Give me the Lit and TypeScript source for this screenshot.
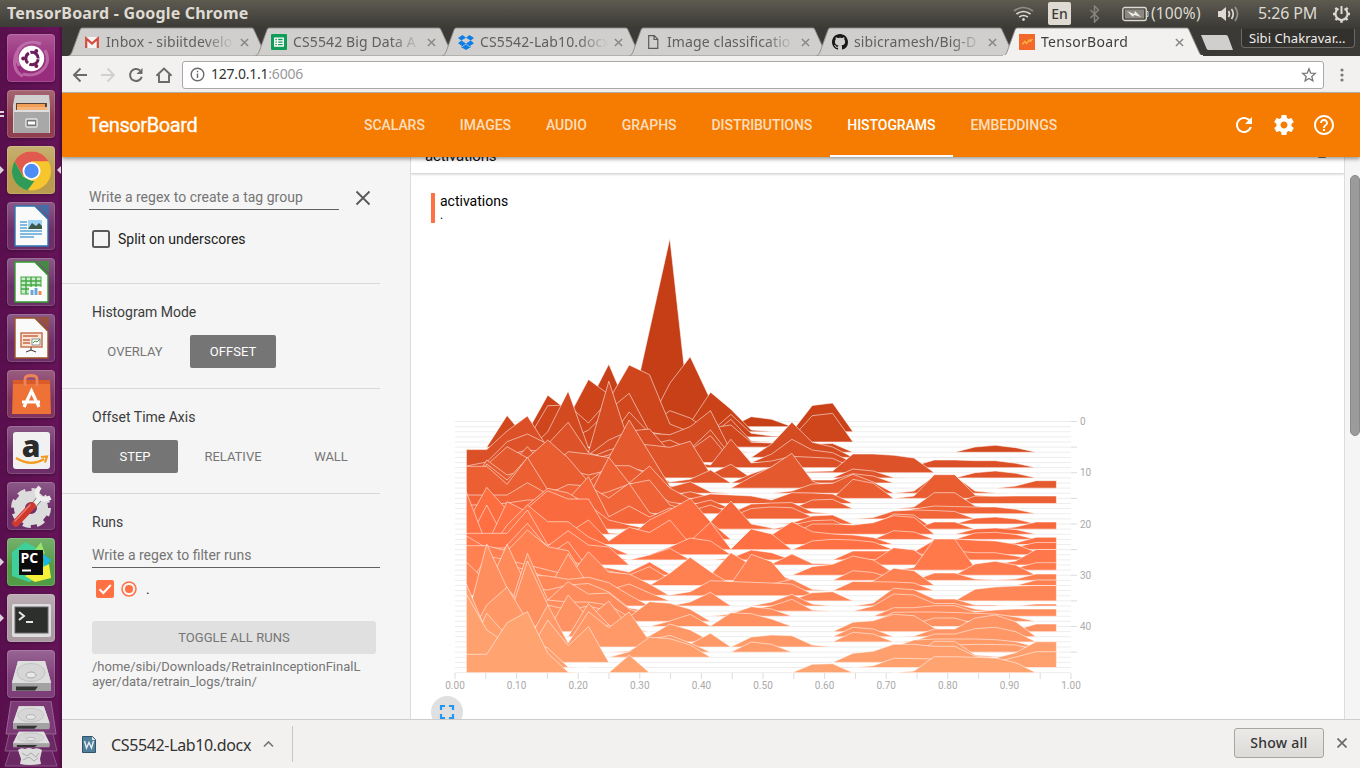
import { LitElement, html, css, svg } from "lit";
import { customElement, property } from "lit/decorators.js";
import { classMap } from "lit/directives/class-map.js";

/* ---------- histogram data: step -> runs of [first bin, y, y, ...] ---------- */
type Run = number[];
const RIDGES: Record<number, Run[]> = {
  0: [[9, 330, 238.5]],
  1: [[6, 404, 364.2, 412, 423, 383.3, 356.8, 400, 418], [14, 416.7, 419.3]],
  2: [[4, 395.2, 411, 418], [11, 423, 392.2, 409.3, 430, 431.5], [17, 405.5, 403]],
  3: [[4, 420, 418, 379.5, 394.5, 400, 425, 410.7, 418, 432, 414.3, 433.3, 436]],
  4: [[3, 440, 405.7, 405, 423, 400, 365, 374.7, 424, 432, 436, 419.3, 441], [16, 438, 415.7, 413.3]],
  5: [[2, 415.5, 440, 442, 440, 430, 410, 393.3, 432, 436, 430, 428, 425, 442.3, 443]],
  6: [[3, 451, 431.7, 391.2, 448, 440, 412, 433.3, 434.7, 426.7, 410.7, 451], [17, 444, 443.5], [25, 447, 445.3, 447.7]],
  7: [[4, 450, 445, 452, 381.2, 443, 445, 440, 449, 430, 456], [15, 444, 422.2, 442.3, 447]],
  8: [[5, 450, 455, 440, 431, 429, 452, 450, 435.7, 460], [15, 454, 439.3, 450, 452.7]],
  9: [[0, 449.6, 449.6, 431, 416, 448, 450, 458, 450, 445, 452, 460, 462, 465, 439.3, 463, 461, 456.3, 457.3, 458.3], [22, 466, 460, 460, 460.7, 460.7, 463.3]],
  10: [[0, 466, 462, 441.7, 434, 444, 422.3, 452.5, 460, 450, 455, 455], [17, 471.5, 471, 454, 454, 455.3, 458]],
  11: [[1, 468, 455, 450, 452, 455, 460, 455, 443, 445, 447.3, 441.3, 474, 464.3], [19, 469, 471, 477.5], [25, 472.7, 471, 473.3]],
  12: [[0, 474, 470, 468, 446.7, 470, 470, 465, 460, 452, 470, 482, 479.3, 470], [14, 474, 467, 457, 480, 480, 473.7, 476]],
  13: [[1, 465, 446.7, 458, 470, 451.7, 454, 457.7, 420, 453, 486], [14, 477, 466.7, 453.3, 481], [27, 486, 480.7, 480.7]],
  14: [[1, 460, 475, 470, 465, 470, 475, 470, 468, 472, 487.3, 481.7, 492], [16, 491, 484, 483.3, 474.3, 482], [22, 491, 476, 476, 491, 493]],
  15: [[1, 464, 480, 458, 440, 458, 482, 465.7, 465.7, 475, 496, 491.7, 497], [19, 479.3, 483.3], [22, 496, 474.7, 474.7, 495, 497]],
  16: [[0, 466.3, 466.3, 484.3, 457.3, 490, 490, 487, 485, 483, 466, 488, 499, 494, 495, 496, 500, 492.7, 493, 494], [25, 496, 496.3, 496, 496, 496]],
  17: [[3, 495, 492, 490, 497, 457.3, 483, 490, 502, 505, 500], [17, 500, 499.3], [22, 507, 492.7, 492.7, 506]],
  18: [[3, 500, 500, 496, 497, 491.7, 484, 480, 505, 511, 505, 513, 504, 503, 502.5, 512], [22, 509, 506, 506.5, 507, 507, 509.3]],
  19: [[0, 495, 495, 495, 482.7, 494, 484.5, 486, 498, 483.3, 512.7, 517], [13, 517, 508.5, 507, 507.7, 517], [20, 517.5, 511, 510, 510.5, 511.5]],
  20: [[0, 505, 505, 503, 500, 500, 499, 476.7, 516.7, 506, 517, 508, 515], [16, 523, 516, 515], [25, 518.3, 517, 519]],
  21: [[3, 505, 488.3, 493, 505, 520, 525], [12, 522, 501, 524, 528], [16, 525, 520.7, 520], [20, 526, 514, 515], [23, 522, 522], [27, 527, 522, 522]],
  22: [[2, 530, 508, 490.7, 499, 499, 533], [17, 524, 524, 525, 522.7, 515.7, 517.3], [25, 529, 528, 529.5]],
  23: [[0, 524, 487.3, 510, 520, 530, 530], [8, 537, 520, 510, 498.3, 522], [21, 530.7, 532], [25, 533, 532.3, 534.5]],
  24: [[0, 560, 505, 544, 532, 535, 533, 520, 541, 527.3, 532.5, 520, 544], [15, 535, 521.7, 531.7, 534, 535, 537.5], [27, 543, 537.3, 537.3]],
  25: [[0, 492, 545, 501.7, 512, 535, 544], [11, 541, 522.3, 549, 529, 534], [17, 541, 539.3, 540, 542], [27, 547, 542.5, 542.5]],
  26: [[2, 525, 505, 521.7, 521.7, 537, 546], [10, 547, 538, 541], [22, 552, 540, 539, 540.3, 541, 544.3, 552]],
  27: [[0, 533.3, 533.3, 533.3, 510, 545, 540, 550, 556], [9, 555, 548.3], [13, 558, 550, 552.7], [19, 551, 551, 551, 551], [24, 551, 552.7, 552.7, 556]],
  28: [[2, 550, 530, 546, 530.7, 545, 547], [15, 564, 554, 563.5, 564], [20, 561, 547.7, 550], [26, 564, 561, 549.5, 549.5]],
  29: [[0, 536, 548, 548, 545, 555, 541.7, 569], [22, 567.5, 539, 539, 568], [27, 568, 562.7, 562.7]],
  30: [[2, 545, 523.3, 548, 560, 567, 568, 572, 562, 574], [17, 566.7, 564.3, 556, 560, 573], [25, 564, 561.3, 565]],
  31: [[2, 555, 550, 560, 565, 570, 571, 575, 566.7, 579], [12, 575, 552.7, 565, 570], [19, 570.7, 572.5, 579], [23, 573, 573, 579, 580, 579, 574, 574]],
  32: [[0, 545.7, 545.7, 551, 530, 546.7, 550.7, 583], [10, 573.3, 557.3, 571.7, 584, 554.3, 561.7], [20, 581, 568.3, 570.7], [28, 580, 580]],
  33: [[1, 556, 560, 565, 570, 575, 580], [15, 584, 579.3, 589.3], [19, 581.5, 581.7, 582, 583]],
  34: [[0, 562, 582, 565, 570, 578, 578, 551.7, 572.3, 574, 584], [10, 595, 591.7, 580.7, 581.5, 582.3, 583, 584, 594]],
  35: [[3, 570, 590, 554, 585, 590, 584, 593], [16, 600, 592.7, 591.7], [25, 589.3, 587, 586, 585.5, 585.5]],
  36: [[2, 580, 575, 576, 579.3, 577.3, 582.7, 595], [11, 602, 592.3], [15, 602, 594.3, 604], [20, 603, 588.3, 589.7, 599, 599, 605, 605], [27, 609, 604, 604]],
  37: [[1, 590, 544.3, 588, 590, 585, 583.5, 592, 608], [14, 609, 606, 599.3, 610], [20, 606, 594, 595, 603.5, 603.5, 609]],
  38: [[2, 618, 553.3, 600, 581.7, 594, 593, 609], [13, 614, 606.7, 609], [21, 607.7, 607.7, 605.7, 605.7, 612, 610, 609, 609, 609]],
  39: [[0, 625, 544, 588, 612, 600, 602, 602, 605, 617, 601.7, 603.3, 609.3], [21, 612.3, 612, 612, 612.5, 613.3, 614, 617]],
  40: [[2, 623, 561, 605, 610, 606, 611], [10, 621, 614.3, 626, 612.7, 613.7, 619], [22, 624, 618, 618, 624]],
  41: [[3, 628, 631, 595, 618, 601, 628], [19, 622.3, 620.7, 614.3, 615.7, 628], [27, 630, 624, 624]],
  42: [[6, 603.3, 625], [19, 627.3, 629], [22, 636, 629, 629, 618, 615, 621.7]],
  43: [[1, 605, 587, 621, 636], [6, 630, 625], [9, 636, 624, 630, 641], [19, 632.3, 634], [22, 641, 634, 634, 628.7, 627.3, 631.7]],
  44: [[3, 642, 605, 643, 611.7, 627.7, 612, 641], [11, 644, 633.3], [14, 637, 635, 635.7, 645], [22, 640, 639, 639, 639, 639.7, 641.7]],
  45: [[0, 584, 632, 645, 645], [8, 651, 640, 635.3, 643], [14, 642, 644.3], [23, 646, 645, 644.3, 644.5, 645, 650]],
  46: [[1, 613.3, 636, 645, 652], [8, 651.7, 637.3, 638.7, 645], [22, 656, 641.3, 641.3, 655, 656.5]],
  47: [[2, 650, 655, 620, 645.7, 626.7], [19, 653.3, 651.3, 644.3, 644.3, 646.3, 646.3, 656, 658, 652.7, 641.7, 641.7]],
  48: [[0, 594, 630, 644, 640, 648, 667], [20, 665.7, 658.3, 658.5, 659, 659, 663, 662, 657, 651.7, 651.7]],
  49: [[0, 654.3, 654.3, 622.7, 611.7, 653.3, 672], [8, 655], [17, 664.3, 663.7], [22, 671, 656.7, 656.7, 657.3, 658, 662.7]],
};

const LAST = 49;
const binX = (k: number) => 466.4 + 20.345 * k;
const baseY = (s: number) => 421.5 + 5.125 * s;

function ridgePath(step: number, run: Run): string {
  const [start, ...ys] = run;
  const b = baseY(step);
  const end = start + ys.length - 1;
  const pts: string[] = [];
  pts.push(start > 0 ? `${binX(start - 1)},${b}` : `${binX(0)},${b}`);
  ys.forEach((y, i) => pts.push(`${binX(start + i)},${Math.min(y, b)}`));
  pts.push(end < 29 ? `${binX(end + 1)},${b}` : `${binX(29)},${b}`);
  return "M" + pts.join("L") + "Z";
}

function ridgeColor(step: number): string {
  const lo = [198, 62, 21], mid = [255, 112, 67], hi = [255, 163, 113];
  const t = step / (LAST / 2);
  const [a, b, f] = t < 1 ? [lo, mid, t] : [mid, hi, t - 1];
  return `rgb(${a.map((v, i) => Math.round(v + (b[i] - v) * f)).join(",")})`;
}

@customElement("ridge-chart")
class RidgeChart extends LitElement {
  static styles = css`
    :host { display: block; }
    svg { display: block; }
    .grid { stroke: #ededed; stroke-width: 1; }
    .tick { stroke: #dcdcdc; stroke-width: 1; }
    .ridge { stroke: rgba(255, 255, 255, 0.6); stroke-width: 0.9; }
    .lbl { font: 10px Roboto, sans-serif; fill: #aaa; }
    .mid { text-anchor: middle; }
  `;
  render() {
    const steps = Array.from({ length: LAST + 1 }, (_, i) => i);
    const xs = Array.from({ length: 21 }, (_, i) => i);
    return html`<svg width="680" height="473" viewBox="431 223 680 473">
      ${steps.map((s) => svg`<line class="grid" x1="455" x2="1071" y1=${baseY(s)} y2=${baseY(s)} />`)}
      ${steps.filter((s) => s % 5 === 0).map((s) => svg`<line class="tick" x1="1071" x2="1077" y1=${baseY(s)} y2=${baseY(s)} />`)}
      ${xs.map((i) => svg`<line class="tick" x1=${455 + 30.8 * i} x2=${455 + 30.8 * i} y1="673" y2="679" />`)}
      ${steps.map((s) => (RIDGES[s] ?? []).map((r) => svg`<path class="ridge" d=${ridgePath(s, r)} fill=${ridgeColor(s)} />`))}
      ${[0, 10, 20, 30, 40].map((s) => svg`<text class="lbl" x="1080" y=${baseY(s) + 3.5}>${s}</text>`)}
      ${xs.filter((i) => i % 2 === 0).map((i) => svg`<text class="lbl mid" x=${455 + 30.8 * i} y="689">${(i / 20).toFixed(2)}</text>`)}
    </svg>`;
  }
}

/* ---------- launcher ---------- */
const docPage = (c: string, inner: unknown) => svg`
  <path d="M8 4h20l13 13v27H8z" fill="#fafafa" stroke=${c} stroke-width="1.4"/>
  <path d="M30 3h12v12z" fill=${c} opacity=".75"/><path d="M28 4v0l13 13" stroke=${c} stroke-width="1.4"/>${inner}`;
const drive = svg`
  <path d="M11 11h27l6 21v7H5v-7z" fill="#cfcfcf"/><path d="M11 11h27l6 22H5z" fill="#dedede"/>
  <ellipse cx="24" cy="22.500" rx="14" ry="9" fill="#d6d6d6" stroke="#c2c2c2"/><ellipse cx="24" cy="25" rx="5" ry="3" fill="#e8e8e8" stroke="#aaa"/>
  <path d="M5 33h39v8H5z" fill="#a2a2a2"/><path d="M9 36.500h22l-3 4H9z" fill="#333"/>`;

const APPS: { bg: string; art: unknown; left?: string; right?: boolean }[] = [
  { bg: "#96287a", art: svg`<path d="M12 32C4 14 20 4 34 10M38 16c8 16-6 28-22 24M16 42C6 38 6 26 10 18" fill="none" stroke="#c77db5" stroke-width="3" opacity=".7"/>
      <circle cx="24.500" cy="24.500" r="12.700" fill="#fff"/><circle cx="25" cy="24.500" r="6.200" fill="none" stroke="#6d1d58" stroke-width="3" stroke-dasharray="11.400 1.600" stroke-dashoffset="-0.800"/>
      <circle cx="16.200" cy="24.500" r="2" fill="#6d1d58"/><circle cx="29.300" cy="16.900" r="2" fill="#6d1d58"/><circle cx="29.300" cy="32.100" r="2" fill="#6d1d58"/>` },
  { bg: "#8d3b4c", left: "=", art: svg`<path d="M8 5h34l1 10v28H6V15z" fill="#d0d0d0"/><path d="M9 13h31v9H9z" fill="#5a4436"/><path d="M10 14h28v8H10z" fill="#f0a056"/><path d="M10 17h30v5H10z" fill="#f4b47c"/>
      <path d="M7 20h35v23H7z" fill="#a8a8a8"/><path d="M7 20h35v2H7z" fill="#dedede"/><rect x="19" y="29" width="11" height="8" rx="1" fill="#777" stroke="#e4e4e4" stroke-width="1.4"/><rect x="21" y="31.500" width="7" height="3" fill="#fff"/>` },
  { bg: "#b89a4a", left: "a", right: true, art: svg`<circle cx="24.500" cy="25" r="19.500" fill="#f6c62c"/><path d="M7.600 15.200A19.500 19.500 0 0 1 41.400 15.200H24.500L16 30z" fill="#e05a50"/>
      <path d="M7.600 15.200L16 30.500l8.500 4.500h3l-7 9.200A19.500 19.500 0 0 1 7.600 15.200z" fill="#2e9c58"/><circle cx="24.500" cy="25" r="9" fill="#fff"/><circle cx="24.500" cy="25" r="7.200" fill="#4d8df5"/>` },
  { bg: "#6b2a66", art: docPage("#2b78b0", svg`<rect x="21" y="18" width="14" height="9" fill="#9fd3f5"/><path d="M21 27l4-6 4 3 3-3 3 3v3z" fill="#3d5a4a"/><path d="M13 20h7M13 23h7M13 26h7M13 29h22M13 32h22M13 35h14" stroke="#5aa7d8" stroke-width="1.5"/>`) },
  { bg: "#6b2a66", art: docPage("#2f9e2f", svg`<rect x="14" y="19" width="20" height="17" fill="#cdeccd" stroke="#43a843"/><path d="M14 23h20M14 27h20M14 31h20M19 19v17M24 19v17M29 19v17" stroke="#43a843" stroke-width="1.4"/><rect x="22" y="29" width="13" height="9" fill="#fff"/><path d="M25 37v-5M29 37v-7" stroke="#6aa5d8" stroke-width="3"/><path d="M33 37v-4" stroke="#e88a4a" stroke-width="3"/>`) },
  { bg: "#6b2a66", art: docPage("#9c5426", svg`<rect x="14" y="19" width="21" height="14" fill="#fbe3d6" stroke="#c46a45" stroke-width="1.4"/><path d="M16 22h15M16 26h7M16 29h7" stroke="#c46a45" stroke-width="1.3"/><rect x="25" y="25" width="8" height="6" fill="#fff" stroke="#777" stroke-width=".8"/><path d="M26 29l2-2 2 1 3-3" stroke="#2f9e4f" fill="none"/><path d="M24 33v3l-5 2M24 36l5 2" stroke="#333" fill="none"/>`) },
  { bg: "#7d2f5c", art: svg`<path d="M6 13h37l1 31H5z" fill="#ee7135"/><path d="M6 10h37v4H6z" fill="#d95b28"/><path d="M18 16V9q0-3.500 6-3.500T30 9v7" fill="none" stroke="#ee8358" stroke-width="2.800"/><path d="M17 37l7.500-16L32 37M15 32h18" fill="none" stroke="#fff" stroke-width="3.200"/>` },
  { bg: "#6b2a66", art: svg`<rect x="6" y="6" width="37" height="37" rx="3" fill="#f1f1f1"/><text x="24" y="31" font-family="Open Sans, sans-serif" font-weight="800" font-size="30" text-anchor="middle" fill="#2b2b2b">a</text><path d="M9 32q15 9 28 1M34 31l6-.5-2 6" fill="none" stroke="#f39a1f" stroke-width="2.200"/>` },
  { bg: "#6b2a66", art: svg`<circle cx="24" cy="26" r="11.500" fill="none" stroke="#dcdcdc" stroke-width="11"/><circle cx="24" cy="26" r="18" fill="none" stroke="#dcdcdc" stroke-width="4" stroke-dasharray="8 6.140"/>
      <path d="M26 24l8-9" stroke="#6d6d6d" stroke-width="6"/><path d="M26 24l8-9" stroke="#efefef" stroke-width="4.500"/><path d="M33 5q-5 5-1.500 10.500Q37 19 43.500 15.500" fill="none" stroke="#efefef" stroke-width="4.500"/><path d="M9 41L25 24" stroke="#cf3a30" stroke-width="7.500" stroke-linecap="round"/><path d="M8 39L23 23" stroke="#ea7a6e" stroke-width="1.500" stroke-linecap="round"/>` },
  { bg: "#4f9a43", left: "a", art: svg`<path d="M5 14L18 4l12 6 12 26-20 8L5 38z" fill="#3fcf9b"/><path d="M28 12l6-8 4 12z" fill="#9be36a"/><path d="M36 16l8 6-6 8z" fill="#18b8e8"/><path d="M18 38l24-12 2 14-16 4z" fill="#f6f03a"/><rect x="12" y="12" width="24" height="25" fill="#0b0b0b"/><text x="13.500" y="25" font-family="Open Sans, sans-serif" font-weight="700" font-size="14" fill="#fff">PC</text><path d="M15 32.500h9" stroke="#fff" stroke-width="2"/>` },
  { bg: "#a8979f", left: "a", art: svg`<rect x="5" y="10" width="39" height="33" rx="2" fill="#dedede"/><rect x="8" y="13" width="33" height="26" fill="#2c2f2c" stroke="#666"/><path d="M12 18l5 4-5 4" fill="none" stroke="#e8e8e8" stroke-width="2"/><path d="M19 28h7" stroke="#e8e8e8" stroke-width="2"/>` },
  { bg: "#7b3a76", art: drive },
];

@customElement("side-launcher")
class SideLauncher extends LitElement {
  static styles = css`
    :host { display: flex; flex-direction: column; box-sizing: border-box; width: 62px; padding-top: 7px; gap: 8px; background: linear-gradient(90deg, #590f4d 0, #651458 58px, #4d0d43 62px); overflow: hidden; }
    .row { display: grid; grid-template-columns: 7px 48px 7px; align-items: center; flex: none; }
    .tile { width: 48px; height: 48px; border-radius: 4px; box-shadow: inset 0 0 0 1px rgba(255, 255, 255, 0.15), 0 1px 3px rgba(0, 0, 0, 0.3); background-image: linear-gradient(rgba(255, 255, 255, 0.22), rgba(255, 255, 255, 0.02) 60%); }
    .tile svg, .stack svg { display: block; }
    .mark { fill: #dcd3da; }
    .stack { display: flex; flex: none; margin-left: 4px; margin-top: -5px; }
  `;
  render() {
    return html`
      ${APPS.map((a) => html`<div class="row">
        <svg width="7" height="10" viewBox="0 0 7 10">${a.left === "a" ? svg`<path class="mark" d="M0 1l4 4-4 4z"/>` : a.left ? svg`<path class="mark" d="M0 2h4v2H0zM0 6h4v2H0z"/>` : ""}</svg>
        <div class="tile" style="background-color:${a.bg}"><svg width="48" height="48" viewBox="0 0 48 48">${a.art}</svg></div>
        <svg width="7" height="10" viewBox="0 0 7 10">${a.right ? svg`<path class="mark" d="M6 1L2 5l4 4z"/>` : ""}</svg>
      </div>`)}
      <div class="stack"><svg width="54" height="70" viewBox="0 0 54 70">
        <path d="M7 0h40l5 33H2z" fill="#7b3a76" stroke="#9a6595"/><g transform="translate(4.500 -3) scale(.93 .76)">${drive}</g>
        <path d="M5 33h44l4 17H1z" fill="#6b2a66" stroke="#8a5585"/><g transform="translate(4.500 25) scale(.93 .52)">${drive}</g>
        <path d="M6 50h42l5 15H1z" fill="#6b2a66" stroke="#8a5585"/><path d="M14 49q3-3 7-1 4-2 8 0 5-2 9 1l-2 9 1 5q-12 2-21 0l1-5z" fill="#dcdcdc"/><path d="M18 52l5 3 4-3 5 4 3-4M19 59l6-3 5 4 4-3" stroke="#aaa" fill="none"/>
      </svg></div>`;
  }
}

/* ---------- browser tabs ---------- */
const TAB_ICONS: Record<string, unknown> = {
  gmail: svg`<rect x="2" y="3" width="12" height="11" fill="#f4f4f4"/><path d="M2.200 14V4.500l5.800 5 5.800-5V14" fill="none" stroke="#d54b3d" stroke-width="2.200"/>`,
  sheet: svg`<rect width="16" height="16" rx="1" fill="#0f9d58"/><path d="M3.700 4.200h8.600v7.800H3.700zM3.700 6.800h8.600M3.700 9.400h8.600M6.500 4v8" fill="none" stroke="#fff" stroke-width="1.300"/>`,
  dropbox: svg`<path d="M4.500 1L0 4l3.300 2.600L8 3.700zM11.500 1L16 4l-3.300 2.600L8 3.700zM0 9.200l4.500 3L8 9.500 3.300 6.600zM16 9.200l-4.500 3L8 9.500l4.700-2.900zM8 10.300l-3.500 2.600-1.200-.8v1.100L8 16l4.700-2.800v-1.100l-1.200.8z" fill="#0d7ee6"/>`,
  page: svg`<path d="M3.700 1.700h5.500l3.600 3.600v9H3.700zM9 1.700v3.800h3.800" fill="none" stroke="#5a5a5a" stroke-width="1.200"/>`,
  github: svg`<path fill="#191717" d="M8 0C3.580 0 0 3.580 0 8c0 3.540 2.290 6.530 5.470 7.590.4.070.55-.17.55-.38 0-.19-.01-.82-.01-1.490-2.010.37-2.530-.49-2.690-.94-.09-.23-.48-.94-.82-1.130-.28-.15-.68-.52-.01-.53.63-.01 1.080.58 1.230.82.72 1.210 1.870.87 2.330.66.07-.52.28-.87.51-1.070-1.780-.2-3.640-.89-3.640-3.950 0-.87.31-1.590.82-2.150-.08-.2-.36-1.020.08-2.120 0 0 .67-.21 2.200.82.64-.18 1.320-.27 2-.27s1.360.09 2 .27c1.530-1.040 2.200-.82 2.200-.82.44 1.100.16 1.920.08 2.120.51.56.82 1.270.82 2.150 0 3.070-1.870 3.750-3.650 3.950.29.25.54.73.54 1.480 0 1.070-.01 1.930-.01 2.200 0 .21.15.46.55.38A8.010 8.010 0 0 0 16 8c0-4.420-3.580-8-8-8z"/>`,
  tb: svg`<rect width="16" height="16" fill="#f2672a"/><path d="M3 10.500l3-3 1.500 2 3-3.500 1 1.300L13.500 5" fill="none" stroke="#fbb03b" stroke-width="1.500"/>`,
};
const TABS = [
  { icon: "gmail", text: "Inbox - sibiitdevelo", active: false },
  { icon: "sheet", text: "CS5542 Big Data A", active: false },
  { icon: "dropbox", text: "CS5542-Lab10.docx", active: false },
  { icon: "page", text: "Image classificatio", active: false },
  { icon: "github", text: "sibicramesh/Big-D", active: false },
  { icon: "tb", text: "TensorBoard", active: true },
];

@customElement("chrome-tab")
class ChromeTab extends LitElement {
  @property() icon = "";
  @property() label = "";
  @property({ type: Boolean }) active = false;
  static styles = css`
    :host { display: grid; width: 187px; height: 28px; flex: none; }
    .shape { grid-area: 1 / 1; overflow: visible; }
    .body { grid-area: 1 / 1; z-index: 1; display: grid; grid-template-columns: 16px 128px 9px; column-gap: 6px; align-items: center; padding-left: 15px; height: 28px; }
    .text { font: 14px "Noto Sans", sans-serif; line-height: 20px; letter-spacing: 0.12px; color: #606060; white-space: nowrap; overflow: hidden; -webkit-mask-image: linear-gradient(90deg, #000 98px, transparent 128px); }
    .dark { color: #3e3e3e; letter-spacing: 0.3px; }
    .x { stroke: #868686; stroke-width: 1.6; }
  `;
  render() {
    const fill = this.active ? "#f2f1ef" : "#d1cfcd";
    return html`<svg class="shape" width="187" height="28" viewBox="0 0 187 28">
        <path d="M-0.500 28Q2 27 3 24L11 2q.6-2 2-2H183q1.500 0 2 2l10 22q1 3 3.500 4z" fill=${fill} stroke="#8e8c88" stroke-width=".9"/>
        ${this.active ? svg`<path d="M-1 28h200" stroke="#f2f1ef" stroke-width="2"/>` : ""}
      </svg>
      <div class="body"><svg width="16" height="16" viewBox="0 0 16 16">${TAB_ICONS[this.icon]}</svg>
        <span class=${classMap({ text: true, dark: this.active })}>${this.label}</span>
        <svg width="9" height="9" viewBox="0 0 10 10"><path class="x" d="M1 1l8 8M9 1l-8 8"/></svg></div>`;
  }
}

@customElement("app-root")
class AppRoot extends LitElement {
  static styles = css`
    :host { display: flex; flex-direction: column; width: 1360px; height: 768px; overflow: hidden; font-family: Roboto, sans-serif; color: #212121; }
    * { box-sizing: border-box; }
    svg { display: block; flex: none; }
    .ui { font-family: "Noto Sans", sans-serif; white-space: nowrap; }

    .panel { display: flex; justify-content: space-between; height: 27px; flex: none; background: linear-gradient(#5e5c4e 0, #59574e 3px, #3d3c37 26px); color: #dfdbd2; }
    .wtitle { font-weight: 700; font-size: 16px; line-height: 27px; padding-left: 7px; letter-spacing: 0.18px; }
    .tray { display: flex; align-items: center; padding-right: 9px; font-size: 16px; }
    .en { width: 23px; height: 23px; background: #dfdbd2; color: #3c3b37; border-radius: 2px; font-size: 14px; line-height: 23px; text-align: center; font-weight: 500; margin: 0 17px 0 14px; }
    .pct { margin: -2px 16px 0 2px; width: 51px; line-height: 24px; letter-spacing: 0.15px; font-size: 15.5px; }
    .time { margin: -2px 14px 0 18px; width: 60px; letter-spacing: -0.15px; line-height: 24px; }

    .below { display: flex; flex: 1; min-height: 0; }
    .window { display: flex; flex-direction: column; width: 1298px; }
    .strip { display: flex; height: 29px; flex: none; padding: 1px 0 0 7px; background: #3c3a36; overflow: hidden; }
    .newtab { margin: 7px 0 0 9px; }
    .user { margin: 1px 5px 0 6px; width: 114px; height: 19px; border: 1px solid #6b6963; border-top: 0; border-radius: 0 0 4px 4px; background: #33312e; color: #f0eeea; font-size: 13px; line-height: 19px; padding-left: 7px; letter-spacing: 0.05px; }

    .bar { display: flex; align-items: center; height: 37px; flex: none; background: #f2f1ef; border-bottom: 1px solid #b9b4ae; padding: 0 9px 0 10px; border-top: 1px solid #f2f1ef; }
    .navs { display: flex; gap: 10px; width: 110px; }
    .omni { display: flex; align-items: center; width: 1142px; height: 28px; border: 1px solid #a9a8a6; border-radius: 3px; background: #fff; padding: 0 6px 0 7px; font-size: 14px; color: #333; }
    .url { flex: 1; padding-left: 6px; letter-spacing: -0.22px; line-height: 20px; margin-top: -2px; }
    .port { color: #999; }
    .dots { margin-left: 12px; }

    .tbar { display: flex; align-items: center; height: 64px; flex: none; background: #f57c00; color: #fff; box-shadow: 0 2px 4px rgba(0, 0, 0, 0.4); z-index: 2; }
    .brand { width: 284.5px; padding-left: 26px; font-size: 20px; letter-spacing: -0.4px; -webkit-text-stroke: 0.3px #fff; }
    .tabs { display: flex; height: 64px; flex: 1; }
    .tab { padding: 0 17.5px; line-height: 64px; font-size: 14px; letter-spacing: -0.05px; font-weight: 500; color: rgba(255, 255, 255, 0.75); }
    .tab.on { color: #fff; border-bottom: 2px solid #fff; height: 64px; }
    .acts { display: flex; gap: 16px; padding-right: 24px; }

    .page { display: flex; flex: 1; min-height: 0; background: #f5f5f5; }
    .side { width: 349px; border-right: 1px solid #dcdcdc; font-size: 14px; }
    .sec { width: 318px; border-bottom: 1px solid #d8d8d8; padding-left: 30px; }
    .s1 { height: 127px; padding: 28px 0 0 27px; }
    .s2 { height: 105px; padding-top: 20px; }
    .s4 { border: 0; padding-top: 20px; }
    .inrow { display: flex; align-items: center; gap: 16px; }
    .input { color: #757575; height: 25px; line-height: 24px; border-bottom: 1px solid #616161; }
    .w250 { width: 250px; }
    .check { display: flex; align-items: center; gap: 8px; margin: 19px 0 0 3px; height: 20px; }
    .h { line-height: 16px; color: #3c3c3c; }
    .btns { display: flex; gap: 12px; margin-top: 15px; }
    .btn { width: 86px; height: 33px; line-height: 33px; text-align: center; border-radius: 2px; font-size: 13px; color: #757575; }
    .btn.on { background: #757575; color: #fff; }
    .runs { margin-top: 13px; width: 288px; }
    .run { display: flex; align-items: center; gap: 6px; margin: 10px 0 0 4px; height: 22px; }
    .dot { margin-left: 2px; }
    .toggle { width: 284px; height: 33px; margin-top: 21px; line-height: 33px; text-align: center; background: #e0e0e0; border-radius: 3px; color: #757575; font-size: 13px; letter-spacing: 0.03px; }
    .path { width: 270px; margin-top: 5px; font-size: 13px; line-height: 15px; color: #757575; word-break: break-all; }

    .main { width: 934px; background: #fff; border-right: 1px solid #dcdcdc; overflow: hidden; }
    .head { display: flex; justify-content: space-between; height: 17px; border-bottom: 1px solid #dadada; padding: 0 18px 0 14px; box-shadow: 0 1px 2px rgba(0, 0, 0, 0.12); font-size: 15px; color: #111; }
    .htext { margin-top: -11px; line-height: 20px; letter-spacing: -0.15px; }
    .caret { width: 8px; height: 1px; background: #777; border-radius: 0 0 4px 4px; }
    .legend { margin: 19px 0 0 20px; height: 30px; border-left: 4px solid #ff7043; padding-left: 5px; font-size: 14px; line-height: 16px; color: #000; }
    .sub { font-size: 12px; line-height: 13px; }
    .chart { display: block; margin-left: 20px; }
    .expand { width: 32px; height: 32px; border-radius: 50%; background: #e0e0e0; margin-left: 20px; display: grid; place-items: center; }
    .scroll { width: 15px; padding: 18px 0 0 5px; background: #f5f5f5; }
    .thumb { width: 10px; height: 261px; border-radius: 5px; background: #9b9b9b; border: 1px solid #8a8a8a; }

    .dl { display: flex; align-items: center; height: 49px; flex: none; background: #f2f1ef; border-top: 1px solid #cfcdca; color: #333; z-index: 1; }
    .item { display: flex; align-items: center; width: 231px; height: 36px; border-right: 1px solid #c9c7c4; padding-left: 20px; }
    .name { margin: 1px 12px 0 15px; width: 140px; font-size: 16px; letter-spacing: -0.36px; }
    .grow { flex: 1; }
    .all { width: 90px; height: 30px; border: 1px solid #a9a6a2; border-radius: 3px; background: linear-gradient(#eceae8, #dddbd8); font-size: 14px; font-weight: 500; line-height: 28px; letter-spacing: 0.25px; text-align: center; margin: -2px 13px 0 0; }
    .close { margin: -2px 13px 0 0; }
  `;

  private icon(d: string, size = 24, fill = "#fff") {
    return html`<svg width=${size} height=${size} viewBox="0 0 24 24"><path d=${d} fill=${fill} /></svg>`;
  }

  private tray() {
    return html`<div class="tray ui">
      <svg width="21" height="16" viewBox="0 0 21 16" fill="none" stroke="#dfdbd2" stroke-width="1.700"><path d="M1 5q9.500-7 19 0" opacity=".45"/><path d="M3.500 8q7-5 14 0M6.200 11q4.300-3 8.600 0"/><circle cx="10.500" cy="13.500" r="1" fill="#dfdbd2" stroke-width="1"/></svg>
      <span class="en">En</span>
      <svg width="16" height="18" viewBox="0 0 16 18"><path d="M2.500 5l8 8L6.500 17V1l4 4-8 8" fill="none" stroke="#85837b" stroke-width="1.500"/></svg>
      <svg width="45" height="16" viewBox="-18 0 45 16"><rect x=".8" y="1.500" width="23.500" height="13" rx="2" fill="none" stroke="#dfdbd2" stroke-width="1.300"/><rect x="3" y="3.500" width="19" height="9" fill="#8a8880"/><path d="M24.500 5.500H26v5h-1.500" fill="none" stroke="#dfdbd2"/><path d="M5 5l7 3 1-3 6 6-7-2-1 2z" fill="#efece5"/></svg>
      <span class="pct">(100%)</span>
      <svg width="22" height="18" viewBox="0 0 22 18"><path d="M0 6h3l5-4v14l-5-4H0z" fill="#dfdbd2"/><path d="M10.500 6q2 3 0 6M13.500 4q3.500 5 0 10" fill="none" stroke="#dfdbd2" stroke-width="1.700"/><path d="M17 2q5 7 0 14" fill="none" stroke="#dfdbd2" stroke-width="1.700" opacity=".5"/></svg>
      <span class="time">5:26 PM</span>
      <svg width="19" height="20" viewBox="0 0 19 20" fill="none" stroke="#dfdbd2"><path d="M6.500 4.700a6 6 0 1 0 6 0" stroke-width="2"/><path d="M9.500 2v8" stroke-width="2"/><path d="M1 10h2.500M15.500 10H18M9.500 16v2.800M3.300 3.800l1.700 1.700M15.700 3.800L14 5.500M3.500 16l1.700-1.700M15.500 16l-1.700-1.700" stroke-width="2.400"/></svg>
    </div>`;
  }

  render() {
    return html`
      <div class="panel"><span class="wtitle ui">TensorBoard - Google Chrome</span>${this.tray()}</div>
      <div class="below">
        <side-launcher></side-launcher>
        <div class="window">
          <div class="strip">
            ${TABS.map((t) => html`<chrome-tab icon=${t.icon} label=${t.text} ?active=${t.active}></chrome-tab>`)}
            <svg class="newtab" width="34" height="16" viewBox="0 0 34 16"><path d="M1 0h25q1.500 0 2 1.500l5 13.500H9q-2 0-2.500-1.500z" fill="#d1cfcd"/></svg>
            <div class="grow"></div>
            <div class="user ui">Sibi Chakravar...</div>
          </div>
          <div class="bar">
            <div class="navs">
              <svg width="17" height="16" viewBox="0 0 17 16" fill="none" stroke="#6a6a6a" stroke-width="1.900"><path d="M15 8H2M8.500 1.500L2 8l6.500 6.500"/></svg>
              <svg width="18" height="16" viewBox="0 0 18 16" fill="none" stroke="#d2d0ce" stroke-width="1.900"><path d="M2 8h13M8.500 1.500L15 8l-6.500 6.500"/></svg>
              <svg width="18" height="16" viewBox="0 0 18 16" fill="none" stroke="#6a6a6a" stroke-width="2"><path d="M14.800 9.800A6 6 0 1 1 13 3.500"/><path d="M15.500 1v6h-6z" fill="#6a6a6a" stroke="none"/></svg>
              <svg width="18" height="16" viewBox="0 0 18 16" fill="none" stroke="#6a6a6a" stroke-width="1.900"><path d="M1.500 8.700L9 1.500l7.500 7.200M4 7.500V15h10V7.500"/></svg>
            </div>
            <div class="omni ui">
              <svg width="15" height="15" viewBox="0 0 15 15" fill="none" stroke="#6a6a6a" stroke-width="1.400"><circle cx="7.500" cy="7.500" r="6.300"/><path d="M7.500 6.500v4.500M7.500 3.800v1.500"/></svg>
              <span class="url">127.0.1.1<span class="port">:6006</span></span>
              <svg width="16" height="16" viewBox="0 0 16 16"><path d="M8 1.800l1.700 4.300 4.600.3-3.500 3 1.100 4.400L8 11.400l-3.900 2.400 1.100-4.400-3.500-3 4.600-.3z" fill="none" stroke="#777" stroke-width="1.300"/></svg>
            </div>
            <svg class="dots" width="12" height="16" viewBox="0 0 12 16" fill="#7a7a7a"><circle cx="6" cy="3" r="1.600"/><circle cx="6" cy="8" r="1.600"/><circle cx="6" cy="13" r="1.600"/></svg>
          </div>
          <div class="tbar">
            <span class="brand">TensorBoard</span>
            <div class="tabs">${["SCALARS", "IMAGES", "AUDIO", "GRAPHS", "DISTRIBUTIONS", "HISTOGRAMS", "EMBEDDINGS"].map((t) => html`<span class=${classMap({ tab: true, on: t === "HISTOGRAMS" })}>${t}</span>`)}</div>
            <div class="acts">
              ${this.icon("M17.65 6.35C16.2 4.9 14.21 4 12 4c-4.420 0-7.990 3.580-7.990 8s3.570 8 7.990 8c3.730 0 6.840-2.550 7.730-6h-2.080c-.82 2.330-3.040 4-5.650 4-3.310 0-6-2.690-6-6s2.690-6 6-6c1.660 0 3.140.69 4.220 1.780L13 11h7V4l-2.350 2.350z")}
              ${this.icon("M19.43 12.98c.04-.32.07-.64.07-.98s-.03-.66-.07-.98l2.110-1.650c.19-.15.24-.42.12-.64l-2-3.460c-.12-.22-.39-.3-.61-.22l-2.490 1c-.52-.4-1.080-.73-1.690-.98l-.38-2.650C14.460 2.180 14.250 2 14 2h-4c-.25 0-.46.18-.49.42l-.38 2.650c-.61.25-1.170.59-1.690.98l-2.490-1c-.23-.09-.49 0-.61.22l-2 3.460c-.13.22-.07.49.12.64l2.110 1.650c-.04.32-.07.65-.07.98s.03.66.07.98l-2.110 1.650c-.19.15-.24.42-.12.64l2 3.460c.12.22.39.3.61.22l2.490-1c.52.4 1.080.73 1.690.98l.38 2.650c.03.24.24.42.49.42h4c.25 0 .46-.18.49-.42l.38-2.650c.61-.25 1.170-.59 1.690-.98l2.490 1c.23.09.49 0 .61-.22l2-3.460c.12-.22.07-.49-.12-.64l-2.110-1.650zM12 15.500c-1.930 0-3.500-1.570-3.500-3.500s1.570-3.500 3.500-3.500 3.500 1.570 3.500 3.500-1.570 3.500-3.500 3.500z")}
              ${this.icon("M11 18h2v-2h-2v2zm1-16C6.480 2 2 6.480 2 12s4.480 10 10 10 10-4.480 10-10S17.520 2 12 2zm0 18c-4.410 0-8-3.590-8-8s3.590-8 8-8 8 3.590 8 8-3.590 8-8 8zm0-14c-2.210 0-4 1.790-4 4h2c0-1.100.9-2 2-2s2 .9 2 2c0 2-3 1.750-3 5h2c0-2.250 3-2.500 3-5 0-2.210-1.790-4-4-4z")}
            </div>
          </div>
          <div class="page">
            <div class="side">
              <div class="sec s1">
                <div class="inrow"><div class="input w250">Write a regex to create a tag group</div>
                  <svg width="16" height="16" viewBox="0 0 16 16"><path d="M1.500 1.500l13 13M14.500 1.500l-13 13" stroke="#585858" stroke-width="1.800"/></svg></div>
                <div class="check"><svg width="18" height="18" viewBox="0 0 18 18"><rect x="1" y="1" width="16" height="16" rx="1.500" fill="none" stroke="#5a5a5a" stroke-width="2"/></svg>Split on underscores</div>
              </div>
              <div class="sec s2"><div class="h">Histogram Mode</div>
                <div class="btns"><span class="btn">OVERLAY</span><span class="btn on">OFFSET</span></div></div>
              <div class="sec s2"><div class="h">Offset Time Axis</div>
                <div class="btns"><span class="btn on">STEP</span><span class="btn">RELATIVE</span><span class="btn">WALL</span></div></div>
              <div class="sec s4"><div class="h">Runs</div>
                <div class="input runs">Write a regex to filter runs</div>
                <div class="run"><svg width="18" height="18" viewBox="0 0 18 18"><rect width="18" height="18" rx="2" fill="#ff7043"/><path d="M3.500 9.200l3.800 3.800 7.500-8" fill="none" stroke="#fff" stroke-width="2"/></svg>
                  <svg width="18" height="18" viewBox="0 0 18 18"><circle cx="9" cy="9" r="7" fill="none" stroke="#ff7043" stroke-width="1.500"/><circle cx="9" cy="9" r="4" fill="#ff7043"/></svg><span class="dot">.</span></div>
                <div class="toggle">TOGGLE ALL RUNS</div>
                <div class="path">/home/sibi/Downloads/RetrainInceptionFinalLayer/data/retrain_logs/train/</div>
              </div>
            </div>
            <div class="main">
              <div class="head"><span class="htext">activations</span><span class="caret"></span></div>
              <div class="legend">activations<div class="sub">.</div></div>
              <ridge-chart class="chart"></ridge-chart>
              <div class="expand"><svg width="16" height="16" viewBox="0 0 16 16"><path d="M2 6V2h4M10 2h4v4M14 10v4h-4M6 14H2v-4" fill="none" stroke="#2196f3" stroke-width="2.200"/></svg></div>
            </div>
            <div class="scroll"><div class="thumb"></div></div>
          </div>
          <div class="dl ui">
            <div class="item">
              <svg width="14" height="17" viewBox="0 0 14 17"><path d="M.5.5h10l3 3v13H.5z" fill="#4f7f9a" stroke="#2f5568"/><path d="M10 .5v3.500h3.500z" fill="#dfe8ee"/><path d="M2.500 5l2 7L7 6.500 9.500 12l2-7" fill="none" stroke="#e6eef3" stroke-width="1.400"/></svg>
              <span class="name">CS5542-Lab10.docx</span>
              <svg width="11" height="8" viewBox="0 0 11 8"><path d="M1 6.500l4.500-4.500L10 6.500" fill="none" stroke="#777" stroke-width="1.700"/></svg>
            </div>
            <div class="grow"></div>
            <div class="all">Show all</div>
            <svg class="close" width="10" height="10" viewBox="0 0 10 10"><path d="M.5.5l9 9M9.500.5l-9 9" stroke="#6a6a6a" stroke-width="1.700"/></svg>
          </div>
        </div>
      </div>`;
  }
}
